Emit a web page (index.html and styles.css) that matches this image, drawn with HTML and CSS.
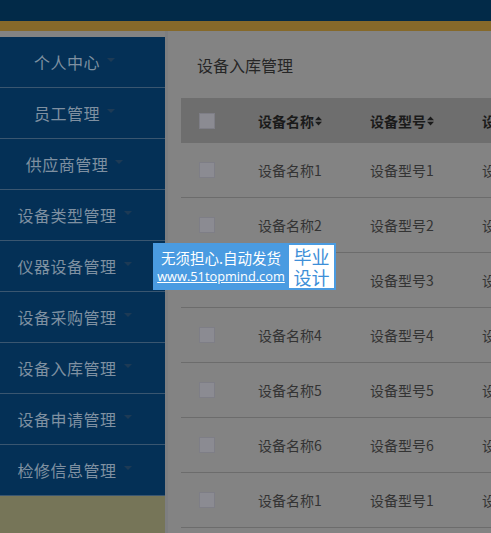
FILE: index.html
```html
<!DOCTYPE html>
<html lang="zh">
<head>
<meta charset="utf-8">
<title>设备入库管理</title>
<link rel="stylesheet" href="styles.css">
</head>
<body>
<header class="topbar"></header>
<div class="layout">
  <aside class="side">
    <nav class="menu">
      <div class="item"><span>个人中心</span><i class="caret"></i></div>
      <div class="item"><span>员工管理</span><i class="caret"></i></div>
      <div class="item"><span>供应商管理</span><i class="caret"></i></div>
      <div class="item"><span>设备类型管理</span><i class="caret"></i></div>
      <div class="item"><span>仪器设备管理</span><i class="caret"></i></div>
      <div class="item"><span>设备采购管理</span><i class="caret"></i></div>
      <div class="item"><span>设备入库管理</span><i class="caret"></i></div>
      <div class="item"><span>设备申请管理</span><i class="caret"></i></div>
      <div class="item"><span>检修信息管理</span><i class="caret"></i></div>
    </nav>
  </aside>
  <main class="main">
    <h1 class="title">设备入库管理</h1>
    <div class="table">
      <div class="row head">
        <div class="cell"><span class="box"></span></div>
        <div class="cell">设备名称<svg class="sort" viewBox="0 0 7 10" width="7" height="10"><path d="M0 4.2L3.5 0.5L7 4.2Z M0 5.8L3.5 9.5L7 5.8Z" fill="#1b1b1b"/></svg></div>
        <div class="cell">设备型号<svg class="sort" viewBox="0 0 7 10" width="7" height="10"><path d="M0 4.2L3.5 0.5L7 4.2Z M0 5.8L3.5 9.5L7 5.8Z" fill="#1b1b1b"/></svg></div>
        <div class="cell">设备类型</div>
      </div>
      <div class="row"><div class="cell"><span class="box"></span></div><div class="cell">设备名称1</div><div class="cell">设备型号1</div><div class="cell">设备类型1</div></div>
      <div class="row"><div class="cell"><span class="box"></span></div><div class="cell">设备名称2</div><div class="cell">设备型号2</div><div class="cell">设备类型2</div></div>
      <div class="row"><div class="cell"><span class="box"></span></div><div class="cell">设备名称3</div><div class="cell">设备型号3</div><div class="cell">设备类型3</div></div>
      <div class="row"><div class="cell"><span class="box"></span></div><div class="cell">设备名称4</div><div class="cell">设备型号4</div><div class="cell">设备类型4</div></div>
      <div class="row"><div class="cell"><span class="box"></span></div><div class="cell">设备名称5</div><div class="cell">设备型号5</div><div class="cell">设备类型5</div></div>
      <div class="row"><div class="cell"><span class="box"></span></div><div class="cell">设备名称6</div><div class="cell">设备型号6</div><div class="cell">设备类型6</div></div>
      <div class="row"><div class="cell"><span class="box"></span></div><div class="cell">设备名称1</div><div class="cell">设备型号1</div><div class="cell">设备类型1</div></div>
    </div>
  </main>
</div>
<a class="badge" href="#">
  <span class="badge-left">
    <span class="badge-line1">无须担心.自动发货</span>
    <span class="badge-line2">www.51topmind.com</span>
  </span>
  <span class="badge-right">毕业<br>设计</span>
</a>
</body>
</html>
```
FILE: styles.css
```css
html, body {
  margin: 0;
  padding: 0;
  height: 100%;
  overflow: hidden;
}
body {
  background: #838383;
  font-family: "Noto Sans CJK SC", "Noto Sans", sans-serif;
  position: relative;
}
.topbar {
  height: 21px;
  background: #022a48;
  border-bottom: 10px solid #86692a;
}
.layout {
  display: flex;
  height: calc(100% - 31px);
}
.side {
  width: 165px;
  flex: none;
  margin-top: 6px;
  background: #767558;
}
.menu {
  background: #043056;
}
.item {
  height: 50px;
  border-bottom: 1px solid #3a5670;
  display: flex;
  align-items: center;
  justify-content: center;
  padding-right: 16px;
  color: #7f90a1;
  font-size: 16px;
  letter-spacing: 0.5px;
}
.caret {
  width: 0;
  height: 0;
  border-left: 4px solid transparent;
  border-right: 4px solid transparent;
  border-top: 4px solid #1d3a55;
  margin-left: 7px;
  margin-top: -4px;
}
.main {
  flex: 1;
  min-width: 0;
  border-left: 3px solid #7d7e80;
  padding: 22px 0 0 13px;
}
.title {
  margin: 0 0 21px 16px;
  font-size: 16px;
  font-weight: normal;
  color: #262626;
  line-height: 24px;
}
.table {
  width: 420px;
}
.row {
  display: grid;
  grid-template-columns: 59px 112px 112px 137px;
  height: 54px;
  border-bottom: 1px solid #6c6c6c;
  align-items: center;
  color: #333333;
  font-size: 14px;
}
.row.head {
  height: 45px;
  border-bottom: none;
  background: #6e6e6e;
  color: #1a1a1a;
  font-weight: bold;
}
.cell {
  padding-left: 18px;
  white-space: nowrap;
  display: flex;
  align-items: center;
}
.box {
  width: 16px;
  height: 16px;
  background: #8b8b92;
  box-sizing: border-box;
  border: 1px solid #7e7e86;
}
.sort {
  margin-left: 1px;
}
.badge {
  position: absolute;
  left: 153px;
  top: 243px;
  display: flex;
  height: 47px;
  background: #4a9be1;
  text-decoration: none;
  padding: 2px 2px 2px 0;
  box-sizing: border-box;
}
.badge-left {
  display: flex;
  flex-direction: column;
  align-items: center;
  justify-content: center;
  width: 136px;
  color: #ffffff;
}
.badge-line1 {
  font-size: 14.5px;
  line-height: 20px;
}
.badge-line2 {
  font-size: 12.8px;
  line-height: 17px;
  text-decoration: underline;
  font-family: "Open Sans", "Noto Sans", sans-serif;
}
.badge-right {
  width: 45px;
  background: #ffffff;
  color: #3d8fd8;
  font-size: 18px;
  line-height: 21px;
  text-align: center;
  display: flex;
  align-items: center;
  justify-content: center;
}
```
